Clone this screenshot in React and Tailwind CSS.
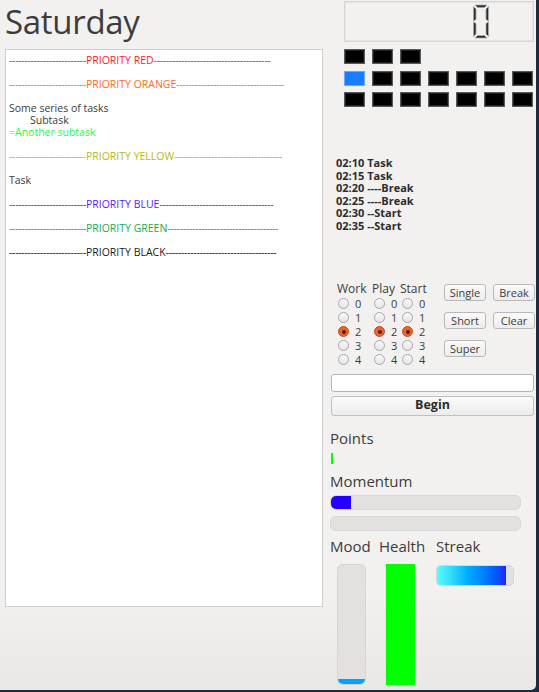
import React from "react";

const F = { fontFamily: '"Open Sans", "Noto Sans", sans-serif' };

function PriorityLine({ label, color, right }) {
  return (
    <div className={`flex whitespace-nowrap h-[12px] leading-[12px] ${color}`}>
      <span className="tracking-[-0.3px]">{"-".repeat(25)}</span>
      <span>{label}</span>
      <span className="tracking-[-0.3px]">{"-".repeat(right)}</span>
    </div>
  );
}

function Blank() {
  return <div className="h-[12px]" />;
}

function Radio({ on }) {
  return on ? (
    <span className="w-[11px] h-[11px] rounded-full bg-[#e9632f] border border-[#c84b1c] flex items-center justify-center">
      <span className="w-[4px] h-[4px] rounded-full bg-[#5a2010]" />
    </span>
  ) : (
    <span className="w-[11px] h-[11px] rounded-full bg-gradient-to-b from-[#f8f8f8] to-[#e6e6e6] border border-[#a8a8a8]" />
  );
}

function RadioCell({ n, on, w }) {
  return (
    <div className={`flex items-center ${w}`}>
      <Radio on={on} />
      <span className="ml-[6px] text-[11px] leading-[14px] text-[#3c3c3c]">{n}</span>
    </div>
  );
}

function Btn({ children }) {
  return (
    <div className="w-[42px] h-[17px] rounded-[3px] border border-[#b9b9b9] bg-gradient-to-b from-[#fbfbfb] to-[#ececec] flex items-center justify-center text-[11px] text-[#3c3c3c] leading-none">
      {children}
    </div>
  );
}

function Sq({ blue }) {
  return blue ? (
    <div className="h-[15px] border border-[#6aa8ff] bg-[#1a7cff]" />
  ) : (
    <div className="h-[15px] border border-[#5a5a5a] bg-black shadow-[inset_0_0_0_1px_#1c1c1c]" />
  );
}

function Digit() {
  const seg = { fill: "#2c2c2c", stroke: "#a8a8a8", strokeWidth: 0.8 };
  return (
    <svg width="18" height="35" viewBox="0 0 18 35">
      <polygon points="3,1 15,1 12.5,3.5 5.5,3.5" {...seg} />
      <polygon points="1.5,2.5 4,5 4,15.5 1.5,17" {...seg} />
      <polygon points="16.5,2.5 14,5 14,15.5 16.5,17" {...seg} />
      <polygon points="1.5,18 4,19.5 4,30 1.5,32.5" {...seg} />
      <polygon points="16.5,18 14,19.5 14,30 16.5,32.5" {...seg} />
      <polygon points="5.5,31.5 12.5,31.5 15,34 3,34" {...seg} />
    </svg>
  );
}

export default function App() {
  const sched = ["02:10 Task", "02:15 Task", "02:20 ----Break", "02:25 ----Break", "02:30 --Start", "02:35 --Start"];
  return (
    <div className="w-[539px] h-[692px] bg-[#1f2a3c] overflow-hidden" style={F}>
      <div className="w-[536px] h-[690px] rounded-br-[5px] bg-gradient-to-b from-[#f2f1f0] from-85% to-[#e9e8e6] flex">
        {/* Left column */}
        <div className="w-[330px] pl-[5px] flex flex-col">
          <div className="h-[49px] text-[33px] leading-[44px] text-[#3c3c3c] tracking-[-0.3px]">Saturday</div>
          <div className="w-[318px] h-[558px] bg-white border border-[#cfcfcf] pt-[4px] pl-[3px] text-[10.5px] text-[#3c3c3c]">
            <PriorityLine label="PRIORITY RED" color="text-[#ff1a1a]" right={38} />
            <Blank />
            <PriorityLine label="PRIORITY ORANGE" color="text-[#ff6a1a]" right={35} />
            <Blank />
            <div className="h-[12px] leading-[12px]">Some series of tasks</div>
            <div className="h-[12px] leading-[12px] pl-[21px]">Subtask</div>
            <div className="h-[12px] leading-[12px] text-[#1aff4a]">=Another subtask</div>
            <Blank />
            <PriorityLine label="PRIORITY YELLOW" color="text-[#b8b820]" right={35} />
            <Blank />
            <div className="h-[12px] leading-[12px]">Task</div>
            <Blank />
            <PriorityLine label="PRIORITY BLUE" color="text-[#5a1aff]" right={37} />
            <Blank />
            <PriorityLine label="PRIORITY GREEN" color="text-[#1aaa4a]" right={36} />
            <Blank />
            <PriorityLine label="PRIORITY BLACK" color="text-[#1a1a1a]" right={36} />
          </div>
        </div>

        {/* Right column */}
        <div className="w-[206px] flex flex-col">
          <div className="ml-[14px] mt-[1px] w-[190px] h-[41px] border border-[#d6d6d6] shadow-[inset_0_0_0_1px_#e6e6e6] flex items-center justify-end pr-[43px]">
            <Digit />
          </div>
          <div className="ml-[14px] mt-[7px] w-[189px] grid grid-cols-7 gap-x-[7px] gap-y-[6.5px]">
            <Sq /><Sq /><Sq /><div /><div /><div /><div />
            <Sq blue /><Sq /><Sq /><Sq /><Sq /><Sq /><Sq />
            <Sq /><Sq /><Sq /><Sq /><Sq /><Sq /><Sq />
          </div>
          <div className="ml-[6px] mt-[50px] flex flex-col text-[11px] font-bold text-[#2c2c2c]">
            {sched.map((s) => (
              <div key={s} className="h-[12.6px] leading-[12.6px] whitespace-pre">{s}</div>
            ))}
          </div>

          <div className="mt-[48px] flex">
            <div className="ml-[7px] flex flex-col">
              <div className="flex text-[12px] leading-[16px] text-[#3c3c3c] h-[16px]">
                <span className="w-[35px]">Work</span>
                <span className="w-[28px]">Play</span>
                <span>Start</span>
              </div>
              {[0, 1, 2, 3, 4].map((n) => (
                <div key={n} className="flex h-[14px] items-center pl-[1px]">
                  <RadioCell n={n} on={n === 2} w="w-[36px]" />
                  <RadioCell n={n} on={n === 2} w="w-[28px]" />
                  <RadioCell n={n} on={n === 2} w="w-[28px]" />
                </div>
              ))}
            </div>
            <div className="ml-[14px] mt-[3px] grid grid-cols-2 gap-x-[7px] gap-y-[11px] h-fit">
              <Btn>Single</Btn>
              <Btn>Break</Btn>
              <Btn>Short</Btn>
              <Btn>Clear</Btn>
              <Btn>Super</Btn>
            </div>
          </div>

          <div className="ml-[1px] mt-[7px] w-[203px] h-[18px] bg-white border border-[#b5b5b5] rounded-[3px]" />
          <div className="ml-[1px] mt-[4px] w-[203px] h-[20px] border border-[#c0c0c0] rounded-[3px] bg-gradient-to-b from-[#fbfbfb] to-[#ececec] flex items-center justify-center text-[12.5px] font-bold text-[#2c2c2c]">
            Begin
          </div>

          <div className="mt-[12px] text-[15px] leading-[20px] text-[#3c3c3c]">Points</div>
          <div className="ml-[1px] mt-[5px] w-[2px] h-[11px] bg-[#00ff00]" />
          <div className="mt-[7px] text-[15px] leading-[20px] text-[#3c3c3c]">Momentum</div>
          <div className="mt-[4px] w-[191px] h-[15px] rounded-[6px] bg-[#e2e1e0] border border-[#d8d7d6] overflow-hidden">
            <div className="w-[20px] h-full bg-[#2200ff]" />
          </div>
          <div className="mt-[6px] w-[191px] h-[15px] rounded-[6px] bg-[#e2e1e0] border border-[#d8d7d6]" />

          <div className="mt-[5px] flex text-[15px] leading-[20px] text-[#3c3c3c]">
            <span className="w-[49px]">Mood</span>
            <span className="w-[57px]">Health</span>
            <span>Streak</span>
          </div>
          <div className="mt-[8px] flex items-start">
            <div className="ml-[7px] w-[29px] h-[121px] rounded-[6px] bg-[#e2e1e0] border border-[#d6d5d4] overflow-hidden flex flex-col justify-end">
              <div className="h-[5px] bg-[#00a2ff]" />
            </div>
            <div className="ml-[20px] w-[29px] h-[121px] bg-[#00ff00]" />
            <div className="ml-[21px] mt-[1px] w-[78px] h-[21px] rounded-[5px] bg-[#e2e1e0] border border-[#d8d7d6] overflow-hidden">
              <div className="w-[69px] h-full bg-gradient-to-r from-[#55ffff] to-[#2020ff]" />
            </div>
          </div>
        </div>
      </div>
    </div>
  );
}
